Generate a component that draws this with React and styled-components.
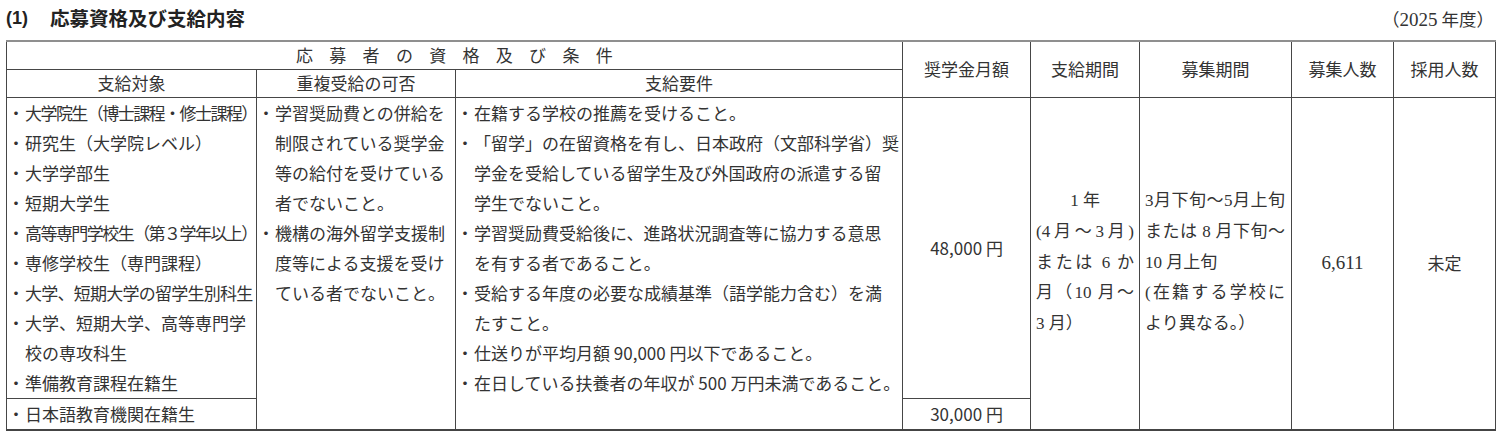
import React from "react";
import styled, { createGlobalStyle } from "styled-components";

const GlobalStyle = createGlobalStyle`
  body {
    margin: 0;
    background: #fff;
    font-family: "Noto Sans CJK JP", "Noto Sans", sans-serif;
    color: #333;
  }
`;

// ページ全体
const Page = styled.div`
  width: 1501px;
  padding: 0 6px;
  box-sizing: border-box;
`;

// タイトル行
const TitleBar = styled.div`
  height: 36px;
  margin-bottom: 4px;
  display: flex;
  align-items: center;
  justify-content: space-between;
`;

const Title = styled.h2`
  margin: 0;
  display: flex;
  align-items: center;
  gap: 22px;
  font-size: 19.5px;
  font-weight: 700;
  color: #222;
  line-height: 1;
`;

const Num = styled.span`
  font-family: "Liberation Sans", sans-serif;
  font-size: 18px;
  font-weight: 700;
`;

const Year = styled.span`
  font-size: 17.5px;
  color: #333;
  padding-right: 1px;
`;

const YearNum = styled.span`
  font-family: "Liberation Serif", serif;
  font-size: 19px;
`;

const Table = styled.table`
  width: 1489px;
  border-collapse: collapse;
  table-layout: fixed;
  border-top: 2px solid #8f8f8f;
  border-bottom: 2px solid #444;
`;

const Row = styled.tr`
  height: ${(p) => p.$h}px;
`;

const Head = styled.th`
  border: 1px solid #464646;
  padding: 0;
  font-size: 17px;
  font-weight: 400;
  line-height: 26px;
  text-align: center;
  vertical-align: middle;
  white-space: nowrap;
  letter-spacing: ${(p) => (p.$spaced ? "16.3px" : "0")};
  text-indent: ${(p) => (p.$spaced ? "16px" : "0")};
`;

const Cell = styled.td`
  border: 1px solid #464646;
  padding: ${(p) => p.$pad || "0"};
  font-size: ${(p) => p.$size || 17}px;
  line-height: 30px;
  text-align: ${(p) => p.$align || "left"};
  vertical-align: ${(p) => p.$valign || "middle"};
  white-space: nowrap;
  font-family: ${(p) =>
    p.$serif
      ? `"Liberation Serif", "Noto Sans CJK JP", serif`
      : `"Noto Sans CJK JP", "Noto Sans", sans-serif`};
`;

// 箇条書きの 1 行
const Line = styled.div`
  display: flex;
  height: 30px;
  align-items: center;
`;

const Dot = styled.span`
  width: 18px;
  flex: none;
  text-align: center;
`;

const Text = styled.span`
  letter-spacing: ${(p) => p.$squeeze || 0}px;
`;

// 期間欄の行（均等割り）
const PeriodLine = styled.div`
  height: 30.7px;
  line-height: 30.7px;
  text-align: ${(p) => (p.$mode === "center" ? "center" : "left")};
  text-align-last: ${(p) =>
    p.$mode === "spread" ? "justify" : p.$mode === "center" ? "center" : "left"};
`;

const targets = [
  { lines: ["大学院生（博士課程・修士課程）"], squeeze: -1.55 },
  { lines: ["研究生（大学院レベル）"] },
  { lines: ["大学学部生"] },
  { lines: ["短期大学生"] },
  { lines: ["高等専門学校生（第３学年以上）"], squeeze: -1.55 },
  { lines: ["専修学校生（専門課程）"] },
  { lines: ["大学、短期大学の留学生別科生"], squeeze: -0.75 },
  { lines: ["大学、短期大学、高等専門学", "校の専攻科生"] },
  { lines: ["準備教育課程在籍生"] },
];

const overlaps = [
  { lines: ["学習奨励費との併給を", "制限されている奨学金", "等の給付を受けている", "者でないこと。"] },
  { lines: ["機構の海外留学支援制", "度等による支援を受け", "ている者でないこと。"] },
];

const requirements = [
  { lines: ["在籍する学校の推薦を受けること。"] },
  {
    lines: [
      "「留学」の在留資格を有し、日本政府（文部科学省）奨",
      "学金を受給している留学生及び外国政府の派遣する留",
      "学生でないこと。",
    ],
  },
  { lines: ["学習奨励費受給後に、進路状況調査等に協力する意思", "を有する者であること。"] },
  { lines: ["受給する年度の必要な成績基準（語学能力含む）を満", "たすこと。"] },
  { lines: ["仕送りが平均月額 90,000 円以下であること。"] },
  { lines: ["在日している扶養者の年収が 500 万円未満であること。"] },
];

const payPeriod = [
  { text: "1 年", mode: "center" },
  { text: "(4月〜3月)", mode: "spread" },
  { text: "または 6 か", mode: "spread" },
  { text: "月（10 月〜", mode: "spread" },
  { text: "3 月）", mode: "left" },
];

const applyPeriod = [
  { text: "3月下旬〜5月上旬", mode: "spread" },
  { text: "または 8 月下旬〜", mode: "spread" },
  { text: "10 月上旬", mode: "left" },
  { text: "(在籍する学校に", mode: "spread" },
  { text: "より異なる。）", mode: "left" },
];

const Bullets = ({ items }) =>
  items.map((item, i) =>
    item.lines.map((line, j) => (
      <Line key={`${i}-${j}`}>
        <Dot>{j === 0 ? "・" : ""}</Dot>
        <Text $squeeze={item.squeeze}>{line}</Text>
      </Line>
    ))
  );

const Period = ({ lines }) =>
  lines.map((l) => (
    <PeriodLine key={l.text} $mode={l.mode}>
      {l.text}
    </PeriodLine>
  ));

const App = () => (
  <Page>
    <GlobalStyle />
    <TitleBar>
      <Title>
        <Num>(1)</Num>
        <span>応募資格及び支給内容</span>
      </Title>
      <Year>
        （<YearNum>2025</YearNum> 年度）
      </Year>
    </TitleBar>

    <Table>
      <colgroup>
        <col style={{ width: 250 }} />
        <col style={{ width: 199 }} />
        <col style={{ width: 447 }} />
        <col style={{ width: 128 }} />
        <col style={{ width: 109 }} />
        <col style={{ width: 152 }} />
        <col style={{ width: 102 }} />
        <col style={{ width: 102 }} />
      </colgroup>
      <thead>
        <Row $h={28}>
          <Head colSpan={3} $spaced>
            応募者の資格及び条件
          </Head>
          <Head rowSpan={2}>奨学金月額</Head>
          <Head rowSpan={2}>支給期間</Head>
          <Head rowSpan={2}>募集期間</Head>
          <Head rowSpan={2}>募集人数</Head>
          <Head rowSpan={2}>採用人数</Head>
        </Row>
        <Row $h={28}>
          <Head>支給対象</Head>
          <Head>重複受給の可否</Head>
          <Head>支給要件</Head>
        </Row>
      </thead>
      <tbody>
        <Row $h={300}>
          <Cell $valign="top">
            <Bullets items={targets} />
          </Cell>
          <Cell rowSpan={2} $valign="top">
            <Bullets items={overlaps} />
          </Cell>
          <Cell rowSpan={2} $valign="top">
            <Bullets items={requirements} />
          </Cell>
          <Cell $align="center">48,000 円</Cell>
          <Cell rowSpan={2} $pad="0 5px" $serif>
            <Period lines={payPeriod} />
          </Cell>
          <Cell rowSpan={2} $pad="0 6px 0 5px" $serif>
            <Period lines={applyPeriod} />
          </Cell>
          <Cell rowSpan={2} $align="center" $serif $size={19}>
            6,611
          </Cell>
          <Cell rowSpan={2} $align="center">
            未定
          </Cell>
        </Row>
        <Row $h={29}>
          <Cell $valign="middle">
            <Bullets items={[{ lines: ["日本語教育機関在籍生"] }]} />
          </Cell>
          <Cell $align="center">30,000 円</Cell>
        </Row>
      </tbody>
    </Table>
  </Page>
);

export default App;
